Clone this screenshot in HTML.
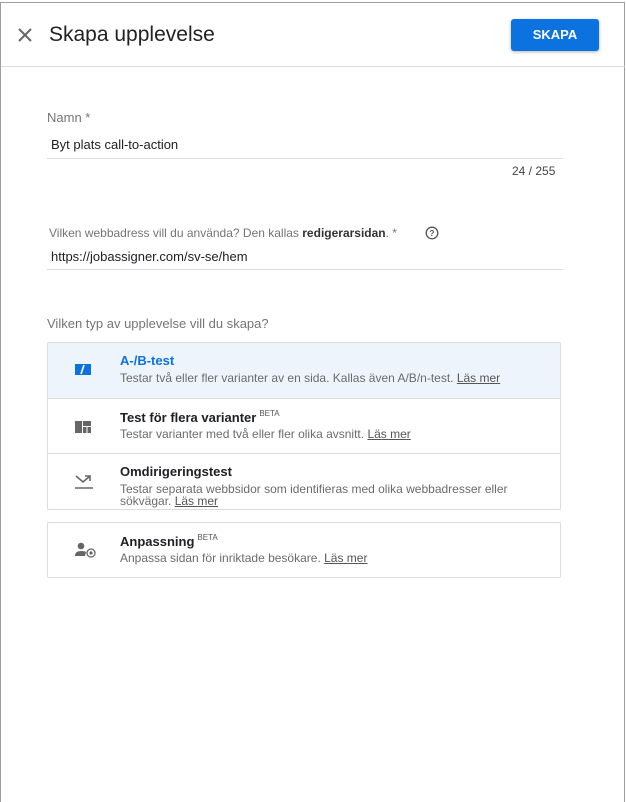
<!DOCTYPE html>
<html><head><meta charset="utf-8"><style>
*{box-sizing:border-box;margin:0;padding:0}
body{width:626px;height:792px;background:#fff;font-family:"Liberation Sans",Arial,sans-serif;color:#202124;position:relative;overflow:hidden}
.frame{position:absolute;left:0;top:2px;width:625px;height:800px;border:1px solid #9e9e9e;border-bottom:none}
.abs{position:absolute;white-space:nowrap}
.hdr{position:absolute;left:1px;right:1px;top:66px;height:1px;background:#dadce0}
.btn{position:absolute;left:511px;top:19px;width:88px;height:32px;background:#0c72e0;color:#fff;border-radius:3px;font-size:13px;font-weight:bold;text-align:center;line-height:32px;box-shadow:0 1px 3px rgba(0,0,0,.3)}
.lbl{color:#757575;font-size:13px}
.line{position:absolute;height:1px;background:#dadce0}
.card{position:absolute;left:47px;width:514px;border:1px solid #dadce0;border-radius:2px}
.row{position:relative;height:55px;border-top:1px solid #dadce0}
.row:first-child{border-top:none}
.t{position:absolute;left:72px;top:10px;font-size:13px;font-weight:bold;color:#202124}
.t sup{font-size:8px;font-weight:normal;color:#555;vertical-align:6px;margin-left:3px}
.d{position:absolute;left:72px;top:29px;font-size:12px;color:#6b6b6b;line-height:12px;width:420px}
.d u{color:#555}
.ic{position:absolute;left:27px;top:20px}
</style></head><body>
<div class="frame"></div>
<svg class="abs" style="left:17px;top:27px" width="16" height="16" viewBox="0 0 16 16"><path d="M2 2L14 14M14 2L2 14" stroke="#666" stroke-width="2"/></svg>
<div class="abs" style="left:49px;top:23px;font-size:21px;color:#222">Skapa upplevelse</div>
<div class="btn">SKAPA</div>
<div class="hdr"></div>
<div class="abs lbl" style="left:47px;top:110px">Namn *</div>
<div class="abs" style="left:51px;top:137px;font-size:13px">Byt plats call-to-action</div>
<div class="line" style="left:47px;top:158px;width:516px"></div>
<div class="abs" style="left:512px;top:164px;font-size:12px;color:#444">24 / 255</div>
<div class="abs lbl" style="left:49px;top:226px;font-size:12px">Vilken webbadress vill du använda? Den kallas <b style="color:#333">redigerarsidan</b>. *</div>
<svg class="abs" style="left:425px;top:226px" width="14" height="14" viewBox="0 0 14 14"><circle cx="7" cy="7" r="5.8" fill="none" stroke="#555" stroke-width="1.3"/><text x="7" y="10" font-size="8" text-anchor="middle" fill="#555" font-family="Liberation Sans" font-weight="bold">?</text></svg>
<div class="abs" style="left:51px;top:249px;font-size:13px">https://jobassigner.com/sv-se/hem</div>
<div class="line" style="left:47px;top:269px;width:516px"></div>
<div class="abs lbl" style="left:47px;top:316px">Vilken typ av upplevelse vill du skapa?</div>
<div class="card" style="top:342px;height:168px">
 <div class="row" style="background:#edf4fc"><svg class="ic" width="16" height="12"><path d="M0 1H16V12H0Z" fill="#0c72e0"/><path d="M9 2L6 11" stroke="#fff" stroke-width="1.6"/></svg><div class="t" style="color:#0c72e0">A-/B-test</div><div class="d">Testar två eller fler varianter av en sida. Kallas även A/B/n-test. <u>Läs mer</u></div></div>
 <div class="row"><svg class="ic" style="top:22px" width="16" height="12"><path d="M0 0H7V12H0ZM8 0H16V5H8ZM8 6H11.5V12H8ZM12.5 6H16V12H12.5Z" fill="#666"/></svg><div class="t">Test för flera varianter<sup>BETA</sup></div><div class="d">Testar varianter med två eller fler olika avsnitt. <u>Läs mer</u></div></div>
 <div class="row" style="height:57px"><svg class="ic" style="top:20px" width="18" height="16"><path d="M1 2L8 8L15 2M10 2H15V7" stroke="#666" stroke-width="1.6" fill="none"/><path d="M0 14H18" stroke="#666" stroke-width="1.6"/></svg><div class="t">Omdirigeringstest</div><div class="d">Testar separata webbsidor som identifieras med olika webbadresser eller sökvägar. <u>Läs mer</u></div></div>
</div>
<div class="card" style="top:522px;height:56px">
 <div class="row"><svg class="ic" style="top:19px" width="22" height="16"><circle cx="6" cy="4" r="3.3" fill="#666"/><path d="M0 14Q0 9 6 9Q10 9 11 10L10 14Z" fill="#666"/><circle cx="16" cy="11" r="4" fill="none" stroke="#666" stroke-width="1.3"/><circle cx="16" cy="11" r="1.6" fill="#666"/></svg><div class="t">Anpassning<sup>BETA</sup></div><div class="d">Anpassa sidan för inriktade besökare. <u>Läs mer</u></div></div>
</div>
</body></html>
